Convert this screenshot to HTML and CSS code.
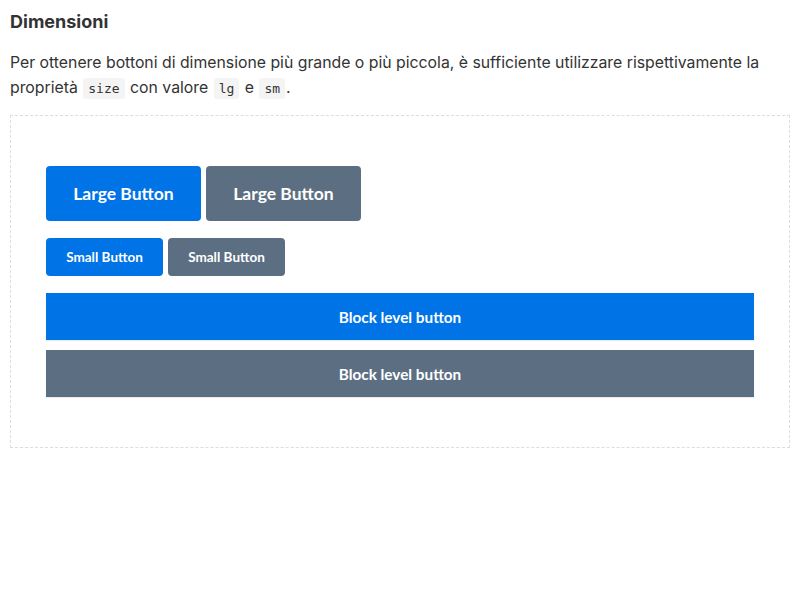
FILE: index.html
```html
<!DOCTYPE html>
<html lang="it">
<head>
<meta charset="utf-8">
<link rel="stylesheet" href="styles.css">
</head>
<body>
<h3 class="title">Dimensioni</h3>
<p class="text">Per ottenere bottoni di dimensione più grande o più piccola, è sufficiente utilizzare rispettivamente la proprietà <code>size</code> con valore <code>lg</code> e <code>sm</code>.</p>
<div class="demo">
  <div class="row">
    <button class="btn primary lg">Large Button</button>
    <button class="btn secondary lg">Large Button</button>
  </div>
  <div class="row">
    <button class="btn primary sm">Small Button</button>
    <button class="btn secondary sm">Small Button</button>
  </div>
  <button class="btn primary block">Block level button</button>
  <button class="btn secondary block">Block level button</button>
</div>
</body>
</html>
```
FILE: styles.css
```css
body {
  margin: 0;
  padding: 10px 10px 0 10px;
  font-family: Inter, "Noto Sans", sans-serif;
  color: #333;
  background: #fff;
}
.title {
  margin: 0;
  font-size: 18px;
  font-weight: 700;
  line-height: 24px;
  color: #333;
}
.text {
  margin: 16px 0 15px;
  font-size: 15.8px;
  line-height: 25px;
  color: #333;
}
code {
  display: inline-block;
  font-family: "DejaVu Sans Mono", monospace;
  font-size: 13px;
  line-height: 21px;
  background: #f4f4f4;
  border-radius: 3px;
  padding: 0 5px;
  margin: 0 1px;
  color: #333;
  vertical-align: 0;
}
.demo {
  border: 1px dashed #ddd;
  padding: 50px 35px 50px 35px;
  display: flex;
  flex-direction: column;
}
.row {
  display: flex;
  gap: 5px;
  margin-bottom: 17px;
}
.btn {
  font-family: Lato, "Open Sans", sans-serif;
  font-weight: 700;
  color: #fff;
  border: none;
  border-radius: 4px;
  cursor: pointer;
}
.primary { background: #0073e6; }
.secondary { background: #5c6f82; }
.lg {
  width: 155px;
  height: 55px;
  font-size: 17.5px;
}
.sm {
  width: 117px;
  height: 38px;
  font-size: 13.5px;
}
.block {
  width: 100%;
  height: 47px;
  border-radius: 0;
  font-size: 15.3px;
  box-shadow: 0 1px 1px rgba(0,0,0,0.08);
}
.block + .block { margin-top: 10px; }
```
